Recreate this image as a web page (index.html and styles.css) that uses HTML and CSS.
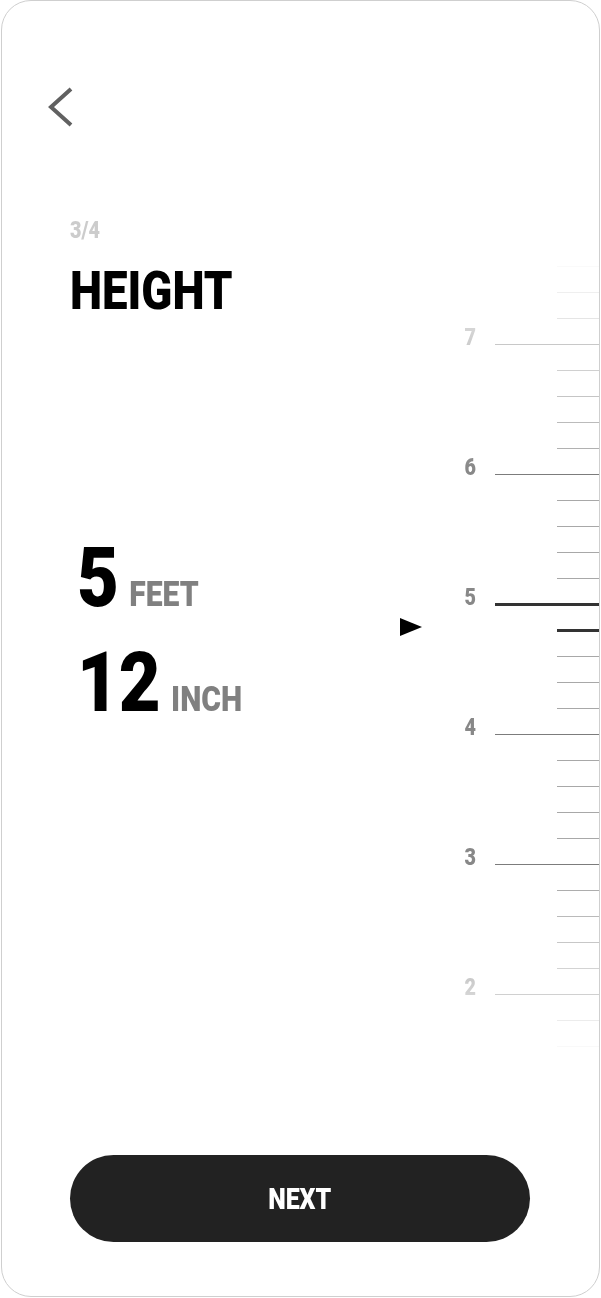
FILE: index.html
```html
<!DOCTYPE html>
<html lang="en">
<head>
    <meta charset="UTF-8">
    <meta name="viewport" content="width=device-width, initial-scale=1.0">
    <title>Height</title>
    <link rel="stylesheet" href="styles.css">
</head>
<body>
    <div class="card">
        <div class="top">
            <button class="back-btn" aria-label="Back">
                <svg width="26" height="42" viewBox="0 0 26 42">
                    <path d="M24 2 L4 20 L24 38" fill="none" stroke="#616161" stroke-width="4"/>
                </svg>
            </button>
        </div>

        <div class="main">
            <div class="info">
                <div class="step"><span class="narrow">3/4</span></div>
                <h1 class="title"><span class="narrow">HEIGHT</span></h1>

                <div class="values">
                    <div class="value"><span class="narrow"><span class="num-big">5</span><span class="unit">FEET</span></span></div>
                    <div class="value"><span class="narrow"><span class="num-big">12</span><span class="unit">INCH</span></span></div>
                </div>
            </div>

            <div class="picker">
                <div class="pointer"></div>
                <div class="ruler">
                    <div class="tick"><i class="line"></i></div>
                    <div class="tick"><i class="line"></i></div>
                    <div class="tick"><i class="line"></i></div>
                    <div class="tick major"><span class="num">7</span><i class="line"></i></div>
                    <div class="tick"><i class="line"></i></div>
                    <div class="tick"><i class="line"></i></div>
                    <div class="tick"><i class="line"></i></div>
                    <div class="tick"><i class="line"></i></div>
                    <div class="tick major"><span class="num">6</span><i class="line"></i></div>
                    <div class="tick"><i class="line"></i></div>
                    <div class="tick"><i class="line"></i></div>
                    <div class="tick"><i class="line"></i></div>
                    <div class="tick"><i class="line"></i></div>
                    <div class="tick major selected"><span class="num">5</span><i class="line"></i></div>
                    <div class="tick selected"><i class="line"></i></div>
                    <div class="tick"><i class="line"></i></div>
                    <div class="tick"><i class="line"></i></div>
                    <div class="tick"><i class="line"></i></div>
                    <div class="tick major"><span class="num">4</span><i class="line"></i></div>
                    <div class="tick"><i class="line"></i></div>
                    <div class="tick"><i class="line"></i></div>
                    <div class="tick"><i class="line"></i></div>
                    <div class="tick"><i class="line"></i></div>
                    <div class="tick major"><span class="num">3</span><i class="line"></i></div>
                    <div class="tick"><i class="line"></i></div>
                    <div class="tick"><i class="line"></i></div>
                    <div class="tick"><i class="line"></i></div>
                    <div class="tick"><i class="line"></i></div>
                    <div class="tick major"><span class="num">2</span><i class="line"></i></div>
                    <div class="tick"><i class="line"></i></div>
                    <div class="tick"><i class="line"></i></div>
                </div>
            </div>
        </div>

        <button class="next-btn"><span class="narrow">NEXT</span></button>
    </div>
</body>
</html>
```

FILE: styles.css
```css
* {
    box-sizing: border-box;
}

body {
    margin: 0;
    background-color: #fff;
    font-family: Roboto, "Liberation Sans", sans-serif;
    font-weight: 900;
}

.card {
    display: flex;
    flex-direction: column;
    height: 1297px;
    margin: 0 1px;
    border: 1px solid #cfcfcf;
    border-radius: 30px;
    padding-bottom: 54px;
    overflow: hidden;
}

/* condensed look: Roboto squeezed horizontally */
.narrow {
    display: inline-block;
    transform: scaleX(0.86);
    transform-origin: left center;
}

.top {
    padding: 86px 0 0 45px;
}

.back-btn {
    display: block;
    padding: 0;
    border: none;
    background: none;
    cursor: pointer;
}

.back-btn svg {
    display: block;
}

.main {
    display: flex;
    margin-top: 90px;
    padding-left: 68px;
}

.info {
    flex: 1;
}

.step {
    font-size: 23px;
    line-height: 1;
    color: #cccccc;
}

.title {
    margin: 23px 0 0;
    font-size: 53px;
    font-weight: 900;
    line-height: 1;
    color: #000;
}

.values {
    margin-top: 218px;
    padding-left: 7px;
}

.value {
    font-size: 84px;
    line-height: 1;
    color: #000;
    white-space: nowrap;
}

.value + .value {
    margin-top: 21px;
}

.unit {
    margin-left: 12px;
    font-size: 35px;
    color: #808080;
}

.picker {
    display: flex;
    align-items: flex-start;
    width: 199px;
}

.pointer {
    width: 0;
    height: 0;
    margin-top: 399px;
    margin-right: 32px;
    border-left: 22px solid #000;
    border-top: 9px solid transparent;
    border-bottom: 9px solid transparent;
}

.ruler {
    flex: 1;
    margin-top: 34px;
    -webkit-mask-image: linear-gradient(to bottom, transparent 0, #000 217px, #000 calc(100% - 180px), transparent 100%);
    mask-image: linear-gradient(to bottom, transparent 0, #000 217px, #000 calc(100% - 180px), transparent 100%);
}

.tick {
    display: flex;
    align-items: flex-start;
    height: 26px;
}

.tick .line {
    flex: 1;
    height: 1px;
    margin-top: 13px;
    margin-left: 103px;
    background-color: #a8a8a8;
}

.tick.major .line {
    margin-left: 0;
    background-color: #7c7c7c;
}

.tick.selected .line {
    height: 3px;
    margin-top: 12px;
    background-color: #333;
}

.num {
    width: 41px;
    margin-top: -5px;
    padding-right: 10px;
    font-size: 23px;
    line-height: 24px;
    text-align: center;
    color: #888;
    transform: scaleX(0.86);
}

.next-btn {
    display: flex;
    align-items: center;
    justify-content: center;
    width: 460px;
    height: 87px;
    margin: auto 0 0 68px;
    border: none;
    border-radius: 44px;
    background-color: #222;
    color: #fff;
    font-family: Roboto, "Liberation Sans", sans-serif;
    font-weight: 900;
    font-size: 29px;
    cursor: pointer;
}

.next-btn .narrow {
    transform-origin: center;
}
```
